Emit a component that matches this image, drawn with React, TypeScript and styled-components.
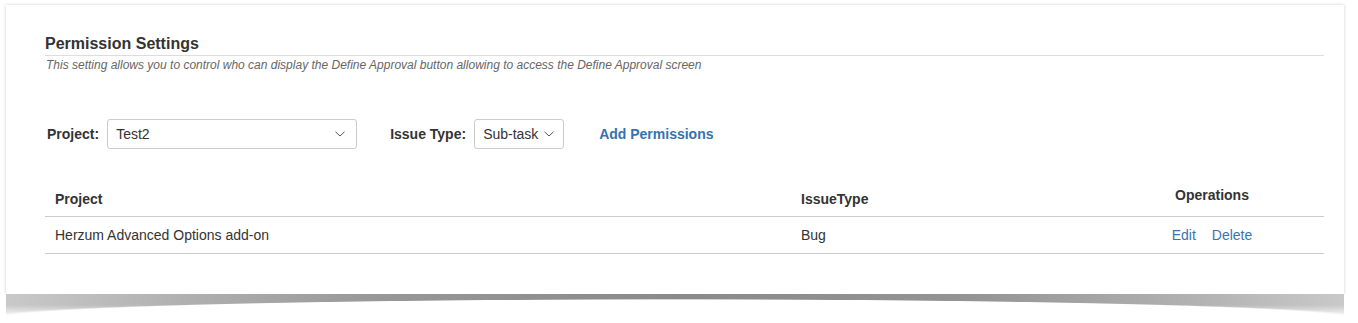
import styled, { createGlobalStyle } from 'styled-components';

const GlobalStyle = createGlobalStyle`
  body {
    margin: 0;
    background: #ffffff;
    font-family: 'Liberation Sans', Arial, sans-serif;
    color: #333333;
  }
`;

const Page = styled.div`
  padding: 5px 14px 30px 6px;
`;

const Card = styled.section`
  position: relative;
  background: #ffffff;
  padding: 29px 20px 40px 39px;
  box-shadow: 0 0 3px rgba(0, 0, 0, 0.2);
  height: 289px;
  box-sizing: border-box;

  /* curled paper shadow under the card */
  &::after {
    content: '';
    position: absolute;
    top: 100%;
    left: 0;
    right: 0;
    height: 22px;
    background:
      linear-gradient(to bottom, rgba(255, 255, 255, 0) 50%, rgba(255, 255, 255, 0.85) 100%),
      linear-gradient(
        to right,
        #c9c9c9 0%,
        #b6b6b6 10%,
        #979797 28%,
        #8a8a8a 50%,
        #949494 72%,
        #b4b4b4 90%,
        #c9c9c9 100%
      );
    mask-image: radial-gradient(ellipse 52% 19px at 50% 24px, transparent 96%, #000 100%);
    -webkit-mask-image: radial-gradient(ellipse 52% 19px at 50% 24px, transparent 96%, #000 100%);
  }
`;

const Heading = styled.h2`
  margin: 0;
  font-size: 16px;
  line-height: 20px;
  font-weight: bold;
  color: #333333;
  padding-bottom: 1px;
  border-bottom: 1px solid #dddddd;
`;

const Description = styled.p`
  margin: 2px 0 0 1px;
  font-size: 12px;
  line-height: 14px;
  font-style: italic;
  color: #666666;
`;

const FormRow = styled.div`
  display: flex;
  align-items: center;
  height: 30px;
  margin-top: 47px;
  padding-left: 2px;
`;

const Field = styled.label`
  display: flex;
  align-items: center;
  gap: 8px;
  margin-right: 33px;
`;

const FieldLabel = styled.span`
  font-size: 14px;
  font-weight: bold;
  color: #333333;
`;

type SelectBoxProps = {
  $width: number;
  $padRight: number;
};

const SelectBox = styled.div<SelectBoxProps>`
  display: flex;
  align-items: center;
  justify-content: space-between;
  box-sizing: border-box;
  width: ${(props) => props.$width}px;
  height: 30px;
  padding: 0 ${(props) => props.$padRight}px 0 8px;
  border: 1px solid #cccccc;
  border-radius: 3px;
  background: #ffffff;
  font-size: 14px;
  color: #333333;
`;

const ActionLink = styled.a`
  font-size: 14px;
  font-weight: bold;
  color: #3572b0;
  text-decoration: none;
  margin-left: 2px;
`;

const Table = styled.table`
  width: 100%;
  margin-top: 33px;
  border-collapse: collapse;
  table-layout: fixed;
`;

type HeadCellProps = {
  $width?: number;
  $center?: boolean;
};

const HeadCell = styled.th<HeadCellProps>`
  width: ${(props) => (props.$width ? `${props.$width}px` : 'auto')};
  padding: ${(props) => (props.$center ? '3px 10px 11px' : '7px 10px')};
  text-align: ${(props) => (props.$center ? 'center' : 'left')};
  font-size: 14px;
  line-height: 20px;
  font-weight: bold;
  color: #333333;
  border-bottom: 1px solid #cccccc;
`;

type CellProps = {
  $center?: boolean;
};

const Cell = styled.td<CellProps>`
  padding: 8px 10px;
  text-align: ${(props) => (props.$center ? 'center' : 'left')};
  font-size: 14px;
  line-height: 20px;
  color: #333333;
  border-bottom: 1px solid #cccccc;
`;

const OpLink = styled.a`
  color: #3b73af;
  text-decoration: none;

  & + & {
    margin-left: 16px;
  }
`;

function Chevron() {
  return (
    <svg width="10" height="6" viewBox="0 0 10 6" fill="none">
      <polyline points="0.5,0.8 5,5 9.5,0.8" stroke="#555555" strokeWidth="1" />
    </svg>
  );
}

const rows = [{ project: 'Herzum Advanced Options add-on', issueType: 'Bug' }];

function App() {
  return (
    <Page>
      <GlobalStyle />
      <Card>
        <Heading>Permission Settings</Heading>
        <Description>
          This setting allows you to control who can display the Define Approval button allowing to
          access the Define Approval screen
        </Description>

        <FormRow>
          <Field>
            <FieldLabel>Project:</FieldLabel>
            <SelectBox $width={250} $padRight={11}>
              Test2
              <Chevron />
            </SelectBox>
          </Field>
          <Field>
            <FieldLabel>Issue Type:</FieldLabel>
            <SelectBox $width={90} $padRight={9}>
              Sub-task
              <Chevron />
            </SelectBox>
          </Field>
          <ActionLink href="#">Add Permissions</ActionLink>
        </FormRow>

        <Table>
          <thead>
            <tr>
              <HeadCell $width={726}>Project</HeadCell>
              <HeadCell $width={289}>IssueType</HeadCell>
              <HeadCell $center>Operations</HeadCell>
            </tr>
          </thead>
          <tbody>
            {rows.map((row) => (
              <tr key={row.project}>
                <Cell>{row.project}</Cell>
                <Cell>{row.issueType}</Cell>
                <Cell $center>
                  <OpLink href="#">Edit</OpLink>
                  <OpLink href="#">Delete</OpLink>
                </Cell>
              </tr>
            ))}
          </tbody>
        </Table>
      </Card>
    </Page>
  );
}

export default App;
